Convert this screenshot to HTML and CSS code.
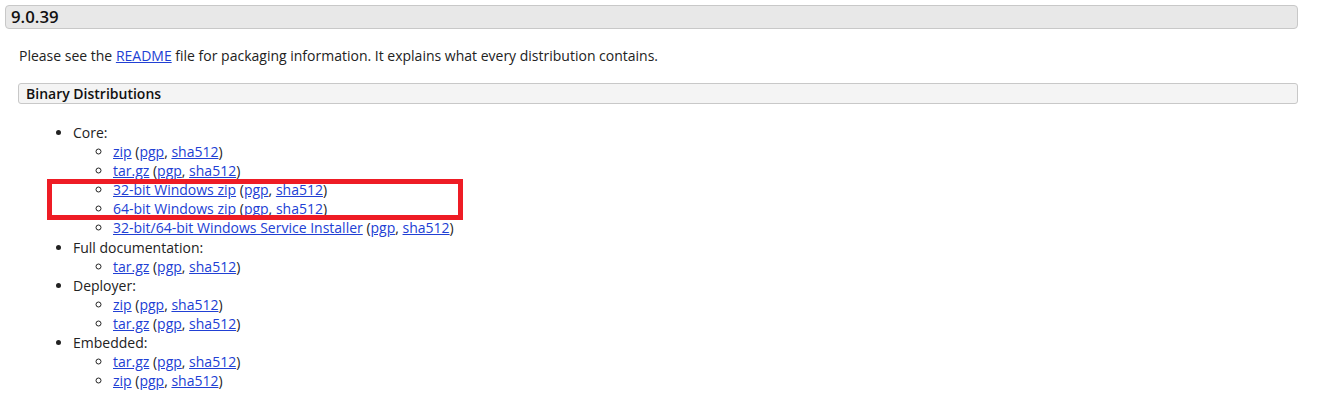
FILE: index.html
```html
<!DOCTYPE html>
<html>
<head>
<meta charset="utf-8">
<link rel="stylesheet" href="styles.css">
</head>
<body>
<div class="page">
  <h3 class="version">9.0.39</h3>
  <div class="section">
    <p class="intro">Please see the <a href="#">README</a> file for packaging information. It explains what every distribution contains.</p>
    <h4 class="subhead">Binary Distributions</h4>
    <ul class="dist">
      <li>Core:
        <ul class="files">
          <li><a href="#">zip</a> (<a href="#">pgp</a>, <a href="#">sha512</a>)</li>
          <li><a href="#">tar.gz</a> (<a href="#">pgp</a>, <a href="#">sha512</a>)</li>
          <li class="hl-wrap">
            <div class="highlight"></div>
            <a href="#">32-bit Windows zip</a> (<a href="#">pgp</a>, <a href="#">sha512</a>)</li>
          <li><a href="#">64-bit Windows zip</a> (<a href="#">pgp</a>, <a href="#">sha512</a>)</li>
          <li><a href="#">32-bit/64-bit Windows Service Installer</a> (<a href="#">pgp</a>, <a href="#">sha512</a>)</li>
        </ul>
      </li>
      <li>Full documentation:
        <ul class="files">
          <li><a href="#">tar.gz</a> (<a href="#">pgp</a>, <a href="#">sha512</a>)</li>
        </ul>
      </li>
      <li>Deployer:
        <ul class="files">
          <li><a href="#">zip</a> (<a href="#">pgp</a>, <a href="#">sha512</a>)</li>
          <li><a href="#">tar.gz</a> (<a href="#">pgp</a>, <a href="#">sha512</a>)</li>
        </ul>
      </li>
      <li>Embedded:
        <ul class="files">
          <li><a href="#">tar.gz</a> (<a href="#">pgp</a>, <a href="#">sha512</a>)</li>
          <li><a href="#">zip</a> (<a href="#">pgp</a>, <a href="#">sha512</a>)</li>
        </ul>
      </li>
    </ul>
  </div>
</div>
</body>
</html>
```
FILE: styles.css
```css
html, body {
  margin: 0;
  padding: 0;
  background: #fff;
}
body {
  font-family: "Open Sans", "Liberation Sans", sans-serif;
  font-size: 14px;
  color: #222;
}
.page {
  padding: 5px 19px 0 5px;
}
.version {
  margin: 0;
  height: 22px;
  line-height: 22px;
  padding-left: 5px;
  font-size: 16.8px;
  font-weight: 600;
  color: #111;
  background: #e8e8e8;
  border: 1px solid #c8c8c8;
  border-radius: 4px;
}
.section {
  padding-left: 13px;
}
.intro {
  margin: 17px 0 0 1px;
  line-height: 19px;
}
.subhead {
  margin: 18px 0 0 0;
  height: 19px;
  line-height: 19px;
  padding-left: 7px;
  font-size: 14px;
  font-weight: 600;
  color: #111;
  background: #f4f4f4;
  border: 1px solid #c8c8c8;
  border-radius: 3px;
}
.dist {
  margin: 19px 0 0 0;
  padding-left: 55px;
  list-style: disc;
  line-height: 19.1px;
}
.files {
  margin: 0;
  padding-left: 40px;
  list-style: circle;
}
a {
  color: #2140d4;
  text-decoration: underline;
}
.hl-wrap {
  position: relative;
}
.highlight {
  position: absolute;
  left: -66px;
  top: -1px;
  width: 406px;
  height: 31px;
  border: 5px solid #ee1c25;
  pointer-events: none;
}
```
